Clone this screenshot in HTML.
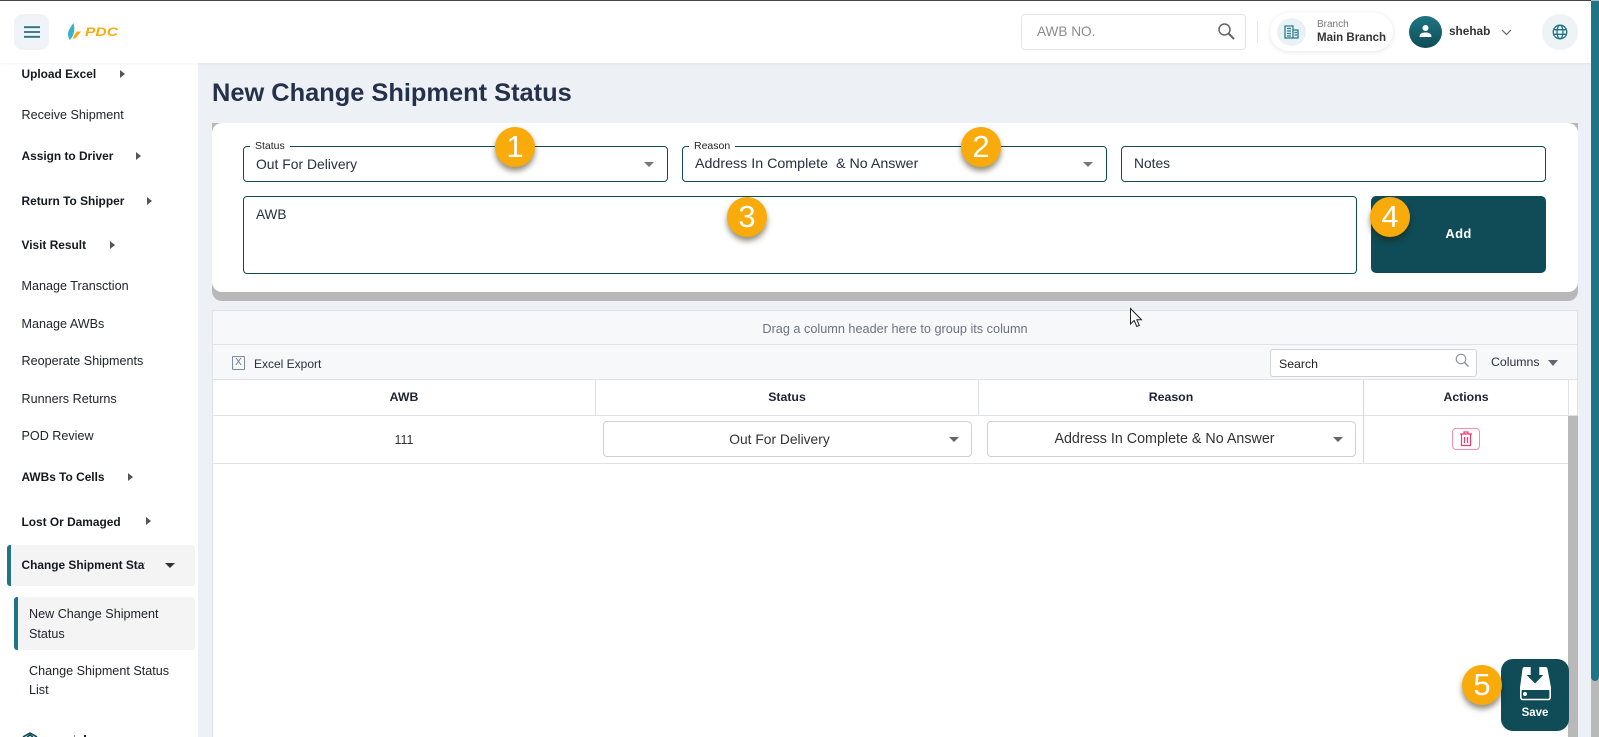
<!DOCTYPE html>
<html><head><meta charset="utf-8"><title>New Change Shipment Status</title>
<style>
*{box-sizing:border-box}
html,body{margin:0;padding:0;width:1599px;height:737px;overflow:hidden;background:#edf0f5;font-family:"Liberation Sans",sans-serif;color:#1c2434}
.a{position:absolute}
.t{position:absolute;white-space:nowrap;line-height:20px;height:20px}
.nav{font-size:12.6px;color:#20242c;left:21.5px}
.b{font-weight:bold;color:#14181f;font-size:11.9px}
.tri{position:absolute;width:0;height:0;border-top:4px solid transparent;border-bottom:4px solid transparent;border-left:5px solid #555}
.down{position:absolute;width:0;height:0;border-left:5px solid transparent;border-right:5px solid transparent;border-top:5px solid #777}
.field{position:absolute;border:1px solid #0f4c56;border-radius:4px;background:#fff}
.leg{position:absolute;background:#fff;font-size:10.5px;line-height:12px;padding:0 5px;color:#222;white-space:nowrap}
.badge{position:absolute;width:40px;height:40px;border-radius:50%;background:#f9ab0b;color:#fff;font-size:31px;line-height:40px;text-align:center;box-shadow:0 4px 6px rgba(40,30,0,.5)}
.line{position:absolute;background:#dfe2e8}
.th{font-weight:bold;font-size:12.3px;text-align:center;color:#1c2434}
.sel{position:absolute;border:1px solid #cdd0d6;border-radius:4px;background:#fff;font-size:13.8px;line-height:35px;text-align:center;color:#333;padding-right:16px}
</style></head><body>

<!-- sidebar -->
<div class="a" style="left:0;top:63px;width:198px;height:674px;background:#fff"></div>
<div class="t nav b" style="top:64px">Upload Excel</div><div class="tri" style="left:120px;top:70px"></div>
<div class="t nav" style="top:105px">Receive Shipment</div>
<div class="t nav b" style="top:146px">Assign to Driver</div><div class="tri" style="left:136px;top:152px"></div>
<div class="t nav b" style="top:191px">Return To Shipper</div><div class="tri" style="left:147px;top:197px"></div>
<div class="t nav b" style="top:235px">Visit Result</div><div class="tri" style="left:110px;top:241px"></div>
<div class="t nav" style="top:276px">Manage Transction</div>
<div class="t nav" style="top:314px">Manage AWBs</div>
<div class="t nav" style="top:351px">Reoperate Shipments</div>
<div class="t nav" style="top:389px">Runners Returns</div>
<div class="t nav" style="top:426px">POD Review</div>
<div class="t nav b" style="top:467px">AWBs To Cells</div><div class="tri" style="left:128px;top:473px"></div>
<div class="t nav b" style="top:512px">Lost Or Damaged</div><div class="tri" style="left:146px;top:517px"></div>

<div class="a" style="left:7px;top:545px;width:188px;height:41px;background:#f4f4f5;border-radius:3px;border-left:4px solid #1f7585"></div>
<div class="t nav b" style="top:555px;width:123.500px;overflow:hidden">Change Shipment Status</div>
<div class="a" style="left:165px;top:563px;width:0;height:0;border-left:5px solid transparent;border-right:5px solid transparent;border-top:5px solid #333"></div>

<div class="a" style="left:14px;top:597px;width:181px;height:53px;background:#f4f4f5;border-radius:3px;border-left:4px solid #1f7585"></div>
<div class="t nav" style="left:29px;top:604px">New Change Shipment</div>
<div class="t nav" style="left:29px;top:624px">Status</div>
<div class="t nav" style="left:29px;top:661px">Change Shipment Status</div>
<div class="t nav" style="left:29px;top:680px">List</div>
<svg class="a" style="left:22px;top:732px" width="16" height="5"><path d="M1 5 L8 1 L15 5 M5 5 L8 3 L11 5" stroke="#0f4c56" stroke-width="1.600" fill="none"/></svg>
<div class="a" style="left:74px;top:735px;width:1px;height:2px;background:#888"></div>
<div class="a" style="left:84px;top:735px;width:2px;height:2px;background:#222"></div>

<!-- header -->
<div class="a" style="left:0;top:0;width:1591px;height:63px;background:#fff;box-shadow:0 1px 2px rgba(0,0,0,.05)"></div>
<div class="a" style="left:0;top:0;width:1599px;height:1px;background:#444"></div>
<div class="a" style="left:14px;top:14px;width:35px;height:36px;background:#f0f4f8;border-radius:9px"></div>
<svg class="a" style="left:23px;top:25px" width="18" height="14"><path d="M1 2.200H17M1 7H17M1 11.800H17" stroke="#2a7080" stroke-width="1.800" fill="none"/></svg>
<svg class="a" style="left:66px;top:22px" width="18" height="20"><path d="M7.500 1 C4 6 2 9 2 12 C2.200 15 3 17 4 18 C7.500 14 9.500 8 7.500 1Z" fill="#35b1cc"/><path d="M10.500 9.500H15L9.500 16.500H6.500Z" fill="#f9ab0b"/></svg>
<div class="t" style="left:84.500px;top:23px;font-size:11.5px;font-weight:bold;font-style:italic;color:#f9ab0b;transform:scaleX(1.36);transform-origin:left center">PDC</div>

<div class="a" style="left:1021px;top:14px;width:225px;height:36px;border:1px solid #e3e5e9;border-radius:4px;background:#fff"></div>
<div class="t" style="left:1037px;top:22px;font-size:13.6px;color:#8c8c8c">AWB NO.</div>
<svg class="a" style="left:1217px;top:22px" width="19" height="19"><circle cx="7.500" cy="7.500" r="5.500" stroke="#666" stroke-width="1.500" fill="none"/><path d="M11.500 11.500L17 17" stroke="#666" stroke-width="2" fill="none"/></svg>
<div class="a" style="left:1257px;top:21px;width:1px;height:22px;background:#e2e4e8"></div>
<div class="a" style="left:1270px;top:13px;width:123px;height:38px;border-radius:19px;background:#fff;box-shadow:0 1px 6px rgba(0,0,0,.1)"></div>
<div class="a" style="left:1277px;top:18px;width:29px;height:28px;border-radius:50%;background:#e9f1f5"></div>
<svg class="a" style="left:1284px;top:25px" width="15" height="14"><path d="M1 1H9V13H1ZM9 5H14V13H9Z" fill="none" stroke="#2a7b8c" stroke-width="1.300"/><path d="M3 3.500H7M3 6H7M3 8.500H7M3 11H7M10.500 7.500H13M10.500 10H13" stroke="#2a7b8c" stroke-width="1.300"/></svg>
<div class="t" style="left:1317px;top:15px;font-size:10px;color:#777">Branch</div>
<div class="t" style="left:1317px;top:28px;font-size:11.500px;font-weight:bold;color:#333">Main Branch</div>
<div class="a" style="left:1409px;top:16px;width:33px;height:32px;border-radius:50%;background:linear-gradient(#1f7585,#0f4c56)"></div>
<svg class="a" style="left:1418px;top:24px" width="15" height="15"><circle cx="7.500" cy="4" r="3" fill="#fff"/><path d="M1.500 13C1.500 9.500 4 8.500 7.500 8.500S13.500 9.500 13.500 13Z" fill="#fff"/></svg>
<div class="t" style="left:1449px;top:21px;font-size:11.800px;font-weight:bold;color:#333">shehab</div>
<svg class="a" style="left:1501px;top:29px" width="11" height="7"><path d="M1 1L5.500 5.500L10 1" stroke="#666" stroke-width="1.200" fill="none"/></svg>
<div class="a" style="left:1542px;top:14px;width:36px;height:36px;border-radius:50%;background:#eef3f6"></div>
<svg class="a" style="left:1552px;top:24px" width="16" height="16" fill="none" stroke="#1f7585" stroke-width="1.300"><circle cx="8" cy="8" r="6.800"/><ellipse cx="8" cy="8" rx="3" ry="6.800"/><path d="M1.500 5.700H14.500M1.500 10.300H14.500"/></svg>

<!-- page scrollbar -->
<div class="a" style="left:1591px;top:0;width:8px;height:737px;background:#b9b9b9"></div>
<div class="a" style="left:1591px;top:1px;width:8px;height:680px;background:#1f7585;border-radius:0 0 4px 4px"></div>

<div class="t" style="left:212px;top:77px;height:32px;line-height:32px;font-size:25.400px;font-weight:bold;color:#25304a">New Change Shipment Status</div>

<!-- form card -->
<div class="a" style="left:212px;top:123px;width:1366px;height:178px;background:#b8b8b8;border-radius:0 0 10px 10px"></div>
<div class="a" style="left:212px;top:123px;width:1366px;height:169px;background:#fff;border-radius:10px"></div>

<div class="field" style="left:243px;top:146px;width:425px;height:36px"></div>
<div class="leg" style="left:250px;top:140px">Status</div>
<div class="t" style="left:256px;top:154px;font-size:13.900px;color:#26303f">Out For Delivery</div>
<div class="down" style="left:644px;top:162px"></div>

<div class="field" style="left:682px;top:146px;width:425px;height:36px"></div>
<div class="leg" style="left:689px;top:140px">Reason</div>
<div class="t" style="left:695px;top:154px;font-size:14.250px;color:#26303f;white-space:pre">Address In Complete  &amp; No Answer</div>
<div class="down" style="left:1083px;top:162px"></div>

<div class="field" style="left:1121px;top:146px;width:425px;height:36px"></div>
<div class="t" style="left:1134px;top:154px;font-size:13.800px;color:#26303f">Notes</div>

<div class="field" style="left:243px;top:196px;width:1114px;height:78px"></div>
<div class="t" style="left:256px;top:205px;font-size:13.600px;color:#26303f">AWB</div>

<div class="a" style="left:1371px;top:196px;width:175px;height:77px;background:#0f4c58;border-radius:5px"></div>
<div class="t" style="left:1371px;top:224px;width:175px;text-align:center;font-size:13px;font-weight:bold;color:#fff;letter-spacing:.3px">Add</div>

<!-- grid -->
<div class="a" style="left:212px;top:310px;width:1366px;height:427px;background:#fff;border:1px solid #dfe2e8;border-bottom:0"></div>
<div class="a" style="left:213px;top:311px;width:1364px;height:68px;background:#f7f8fa"></div>
<div class="line" style="left:213px;top:344px;width:1364px;height:1px"></div>
<div class="line" style="left:213px;top:379px;width:1364px;height:1px"></div>
<div class="line" style="left:213px;top:415px;width:1364px;height:1px"></div>
<div class="line" style="left:213px;top:463px;width:1355px;height:1px"></div>
<div class="line" style="left:595px;top:380px;width:1px;height:35px"></div>
<div class="line" style="left:978px;top:380px;width:1px;height:35px"></div>
<div class="line" style="left:1363px;top:380px;width:1px;height:83px;background:#d5d8dd"></div>
<div class="line" style="left:1568px;top:380px;width:1px;height:35px"></div>
<div class="a" style="left:1568px;top:416px;width:9.500px;height:321px;background:#b9b9b9"></div>

<div class="t" style="left:213px;top:319px;width:1364px;text-align:center;font-size:12.700px;color:#6c7380">Drag a column header here to group its column</div>

<div class="a" style="left:232px;top:356px;width:13px;height:14px;border:1px solid #7a8aa0;border-radius:1px;font-size:10px;line-height:12px;text-align:center;color:#6a7488">X</div>
<div class="t" style="left:254px;top:354px;font-size:12px;color:#26303f">Excel Export</div>

<div class="a" style="left:1270px;top:349px;width:207px;height:28px;background:#fff;border:1px solid #cfd3da;border-radius:3px"></div>
<div class="t" style="left:1279px;top:354px;font-size:12.300px;color:#222">Search</div>
<svg class="a" style="left:1455px;top:353px" width="15" height="15"><circle cx="6" cy="6" r="4.800" stroke="#8a8f96" stroke-width="1.100" fill="none"/><path d="M9.500 9.500L13.500 13.500" stroke="#8a8f96" stroke-width="1.300"/></svg>
<div class="t" style="left:1491px;top:352px;font-size:12.300px;color:#26303f">Columns</div>
<div class="down" style="left:1548px;top:360px;border-left-width:5.500px;border-right-width:5.500px;border-top:6px solid #667"></div>

<div class="t th" style="left:213px;top:387px;width:382px">AWB</div>
<div class="t th" style="left:596px;top:387px;width:382px">Status</div>
<div class="t th" style="left:979px;top:387px;width:384px">Reason</div>
<div class="t th" style="left:1364px;top:387px;width:204px">Actions</div>

<div class="t" style="left:213px;top:430px;width:382px;text-align:center;font-size:12.500px;color:#333">111</div>
<div class="sel" style="left:603px;top:421px;width:369px;height:36px">Out For Delivery</div>
<div class="down" style="left:949px;top:437px;border-top-color:#666"></div>
<div class="sel" style="left:987px;top:421px;width:369px;height:36px;font-size:14.300px;padding-right:14px">Address In Complete &amp; No Answer</div>
<div class="down" style="left:1333px;top:437px;border-top-color:#666"></div>

<div class="a" style="left:1452px;top:428px;width:28px;height:22px;border:1px solid #f490ae;border-radius:4px;background:#fff"></div>
<svg class="a" style="left:1459px;top:431px" width="14" height="16" fill="none" stroke="#f5386f" stroke-width="1.200"><path d="M1 3H13M5 3V1H9V3M2.500 3V14.500H11.500V3M5.500 6V12M8.500 6V12"/></svg>

<!-- cursor -->
<svg class="a" style="left:1129px;top:307px" width="15" height="22"><path d="M1.500 1.500V17L5.200 13.500L7.800 19.500L10.300 18.400L7.800 12.800H12.500Z" fill="#fff" stroke="#222" stroke-width="1"/></svg>

<!-- save -->
<div class="a" style="left:1501px;top:659px;width:68px;height:72px;background:#0f4c58;border-radius:12px"></div>
<svg class="a" style="left:1519px;top:666px" width="33" height="35"><path d="M5.500 1H26.500Q28 1 28.500 3L32 21.500H1L3.500 3Q4 1 5.500 1Z" fill="#fff"/><path d="M11.700 0H20.300V9H24.300L16 17.500L7.700 9H11.700Z" fill="#0f4c58"/><rect x="1.800" y="23" width="29.400" height="10.500" rx="2" fill="#0f4c58" stroke="#fff" stroke-width="1.600"/><path d="M1 21H32V24H1Z" fill="#fff"/><circle cx="6" cy="28" r="2" fill="#fff"/></svg>
<div class="t" style="left:1501px;top:703px;width:68px;text-align:center;font-size:11.500px;font-weight:bold;color:#fff">Save</div>

<div class="badge" style="left:495px;top:127px">1</div>
<div class="badge" style="left:961px;top:127px">2</div>
<div class="badge" style="left:727px;top:197px">3</div>
<div class="badge" style="left:1370px;top:197px">4</div>
<div class="badge" style="left:1462px;top:665px">5</div>
</body></html>
